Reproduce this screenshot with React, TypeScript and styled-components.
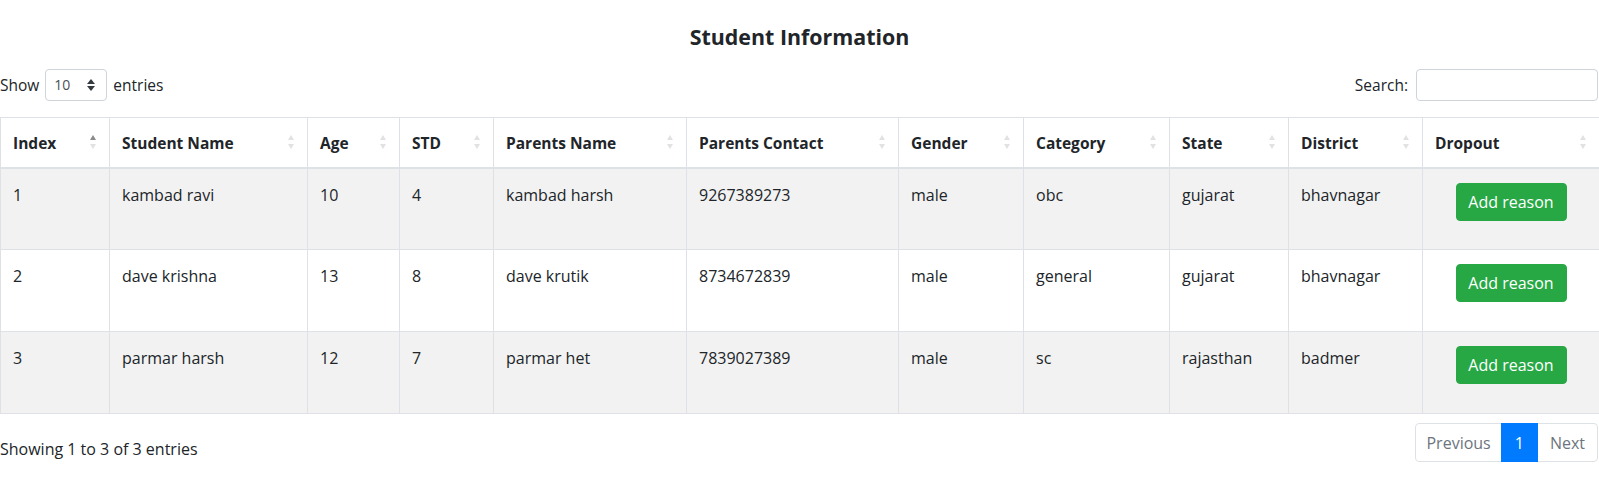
import React from "react";
import styled, { createGlobalStyle } from "styled-components";

const Global = createGlobalStyle`
  html, body { margin: 0; padding: 0; background: #fff; }
  body {
    font-family: "Open Sans", "Noto Sans", sans-serif;
    font-size: 16px;
    line-height: 24px;
    color: #212529;
  }
  * { box-sizing: border-box; }
`;

const Page = styled.div`
  width: 1599px;
  padding-top: 21px;
`;

const Title = styled.h4`
  margin: 0 0 16px 0;
  text-align: center;
  font-size: 21.4px;
  line-height: 32px;
  font-weight: 700;
  color: #212529;
`;

const TopBar = styled.div`
  display: flex;
  justify-content: space-between;
  align-items: center;
  height: 32px;
  margin-bottom: 16px;
  padding-right: 1px;
`;

const Label = styled.label`
  display: flex;
  align-items: center;
  gap: 6px;
  white-space: nowrap;
  font-size: 15.5px;
`;

const SelectBox = styled.div`
  position: relative;
  width: 62px;
  height: 32px;
  border: 1px solid #ced4da;
  border-radius: 4px;
  padding: 4px 8px;
  font-size: 14px;
  line-height: 24px;
  display: flex;
  align-items: center;
  justify-content: space-between;
  color: #495057;
`;

const Arrows = styled.svg`
  width: 8px;
  height: 12px;
  margin-right: 3px;
`;

const SearchInput = styled.div`
  width: 182px;
  height: 32px;
  border: 1px solid #ced4da;
  border-radius: 4px;
  margin-left: 2px;
`;

const Table = styled.table`
  width: 1599px;
  border-collapse: collapse;
  table-layout: fixed;
  border-top: 1px solid #dee2e6;
`;

const Th = styled.th`
  position: relative;
  text-align: left;
  font-weight: 700;
  font-size: 15.5px;
  padding: 13px 30px 11px 12px;
  border: 1px solid #dee2e6;
  border-top: none;
  border-bottom: 2px solid #dee2e6;
  height: 50px;
  vertical-align: middle;
  white-space: nowrap;
`;

const Sort = styled.span<{ $active?: boolean }>`
  position: absolute;
  right: 13px;
  top: 17px;
  display: flex;
  flex-direction: column;
  gap: 4px;
  &::before, &::after {
    content: "";
    display: block;
    width: 0;
    height: 0;
    border-left: 3.5px solid transparent;
    border-right: 3.5px solid transparent;
  }
  &::before {
    border-bottom: 5px solid ${(p) => (p.$active ? "#8a8a8a" : "#e2e2e2")};
  }
  &::after {
    border-top: 5px solid #e2e2e2;
  }
`;

const Tr = styled.tr<{ $odd: boolean }>`
  height: 82px;
  background: ${(p) => (p.$odd ? "#f2f2f2" : "#fff")};
`;

const Td = styled.td<{ $center?: boolean }>`
  padding: ${(p) => (p.$center ? "12px" : "14px 12px 10px")};
  border: 1px solid #dee2e6;
  vertical-align: top;
  text-align: ${(p) => (p.$center ? "center" : "left")};
  white-space: nowrap;
`;

const GreenButton = styled.button`
  margin-top: 2px;
  width: 111px;
  height: 38px;
  background: #28a745;
  border: 1px solid #28a745;
  border-radius: 4px;
  color: #fff;
  font-family: inherit;
  font-size: 16px;
  line-height: 24px;
  padding: 0 6px;
  cursor: pointer;
`;

const Footer = styled.div`
  display: flex;
  justify-content: space-between;
  align-items: flex-start;
  padding-top: 9px;
  padding-right: 1px;
`;

const Info = styled.div`
  padding-top: 14px;
`;

const Pager = styled.ul`
  display: flex;
  list-style: none;
  margin: 0;
  padding: 0;
`;

const PageLink = styled.li<{ $active?: boolean; $first?: boolean; $last?: boolean }>`
  height: 39px;
  padding: 0 ${(p) => (p.$active ? "13px" : p.$first ? "10px" : "12px")};
  display: flex;
  align-items: center;
  border: 1px solid ${(p) => (p.$active ? "#007bff" : "#dee2e6")};
  margin-left: ${(p) => (p.$first ? "0" : "-1px")};
  background: ${(p) => (p.$active ? "#007bff" : "#fff")};
  color: ${(p) => (p.$active ? "#fff" : "#6c757d")};
  border-radius: ${(p) => (p.$first ? "4px 0 0 4px" : p.$last ? "0 4px 4px 0" : "0")};
  position: relative;
  z-index: ${(p) => (p.$active ? 1 : 0)};
`;

const columns = [
  { name: "Index", w: 109 },
  { name: "Student Name", w: 198 },
  { name: "Age", w: 92 },
  { name: "STD", w: 94 },
  { name: "Parents Name", w: 193 },
  { name: "Parents Contact", w: 212 },
  { name: "Gender", w: 125 },
  { name: "Category", w: 146 },
  { name: "State", w: 119 },
  { name: "District", w: 134 },
  { name: "Dropout", w: 177 },
];

const rows = [
  ["1", "kambad ravi", "10", "4", "kambad harsh", "9267389273", "male", "obc", "gujarat", "bhavnagar"],
  ["2", "dave krishna", "13", "8", "dave krutik", "8734672839", "male", "general", "gujarat", "bhavnagar"],
  ["3", "parmar harsh", "12", "7", "parmar het", "7839027389", "male", "sc", "rajasthan", "badmer"],
];

export default function App() {
  return (
    <Page>
      <Global />
      <Title>Student Information</Title>
      <TopBar>
        <Label>
          Show
          <SelectBox>
            <span>10</span>
            <Arrows viewBox="0 0 8 12">
              <path d="M4 0 L8 5 L0 5 Z" fill="#343a40" />
              <path d="M4 12 L8 7 L0 7 Z" fill="#343a40" />
            </Arrows>
          </SelectBox>
          entries
        </Label>
        <Label>
          Search:
          <SearchInput />
        </Label>
      </TopBar>
      <Table>
        <colgroup>
          {columns.map((c) => (
            <col key={c.name} style={{ width: c.w }} />
          ))}
        </colgroup>
        <thead>
          <tr>
            {columns.map((c, i) => (
              <Th key={c.name}>
                {c.name}
                <Sort $active={i === 0} />
              </Th>
            ))}
          </tr>
        </thead>
        <tbody>
          {rows.map((r, i) => (
            <Tr key={r[0]} $odd={i % 2 === 0}>
              {r.map((v, j) => (
                <Td key={j}>{v}</Td>
              ))}
              <Td $center>
                <GreenButton>Add reason</GreenButton>
              </Td>
            </Tr>
          ))}
        </tbody>
      </Table>
      <Footer>
        <Info>Showing 1 to 3 of 3 entries</Info>
        <Pager>
          <PageLink $first>Previous</PageLink>
          <PageLink $active>1</PageLink>
          <PageLink $last>Next</PageLink>
        </Pager>
      </Footer>
    </Page>
  );
}
